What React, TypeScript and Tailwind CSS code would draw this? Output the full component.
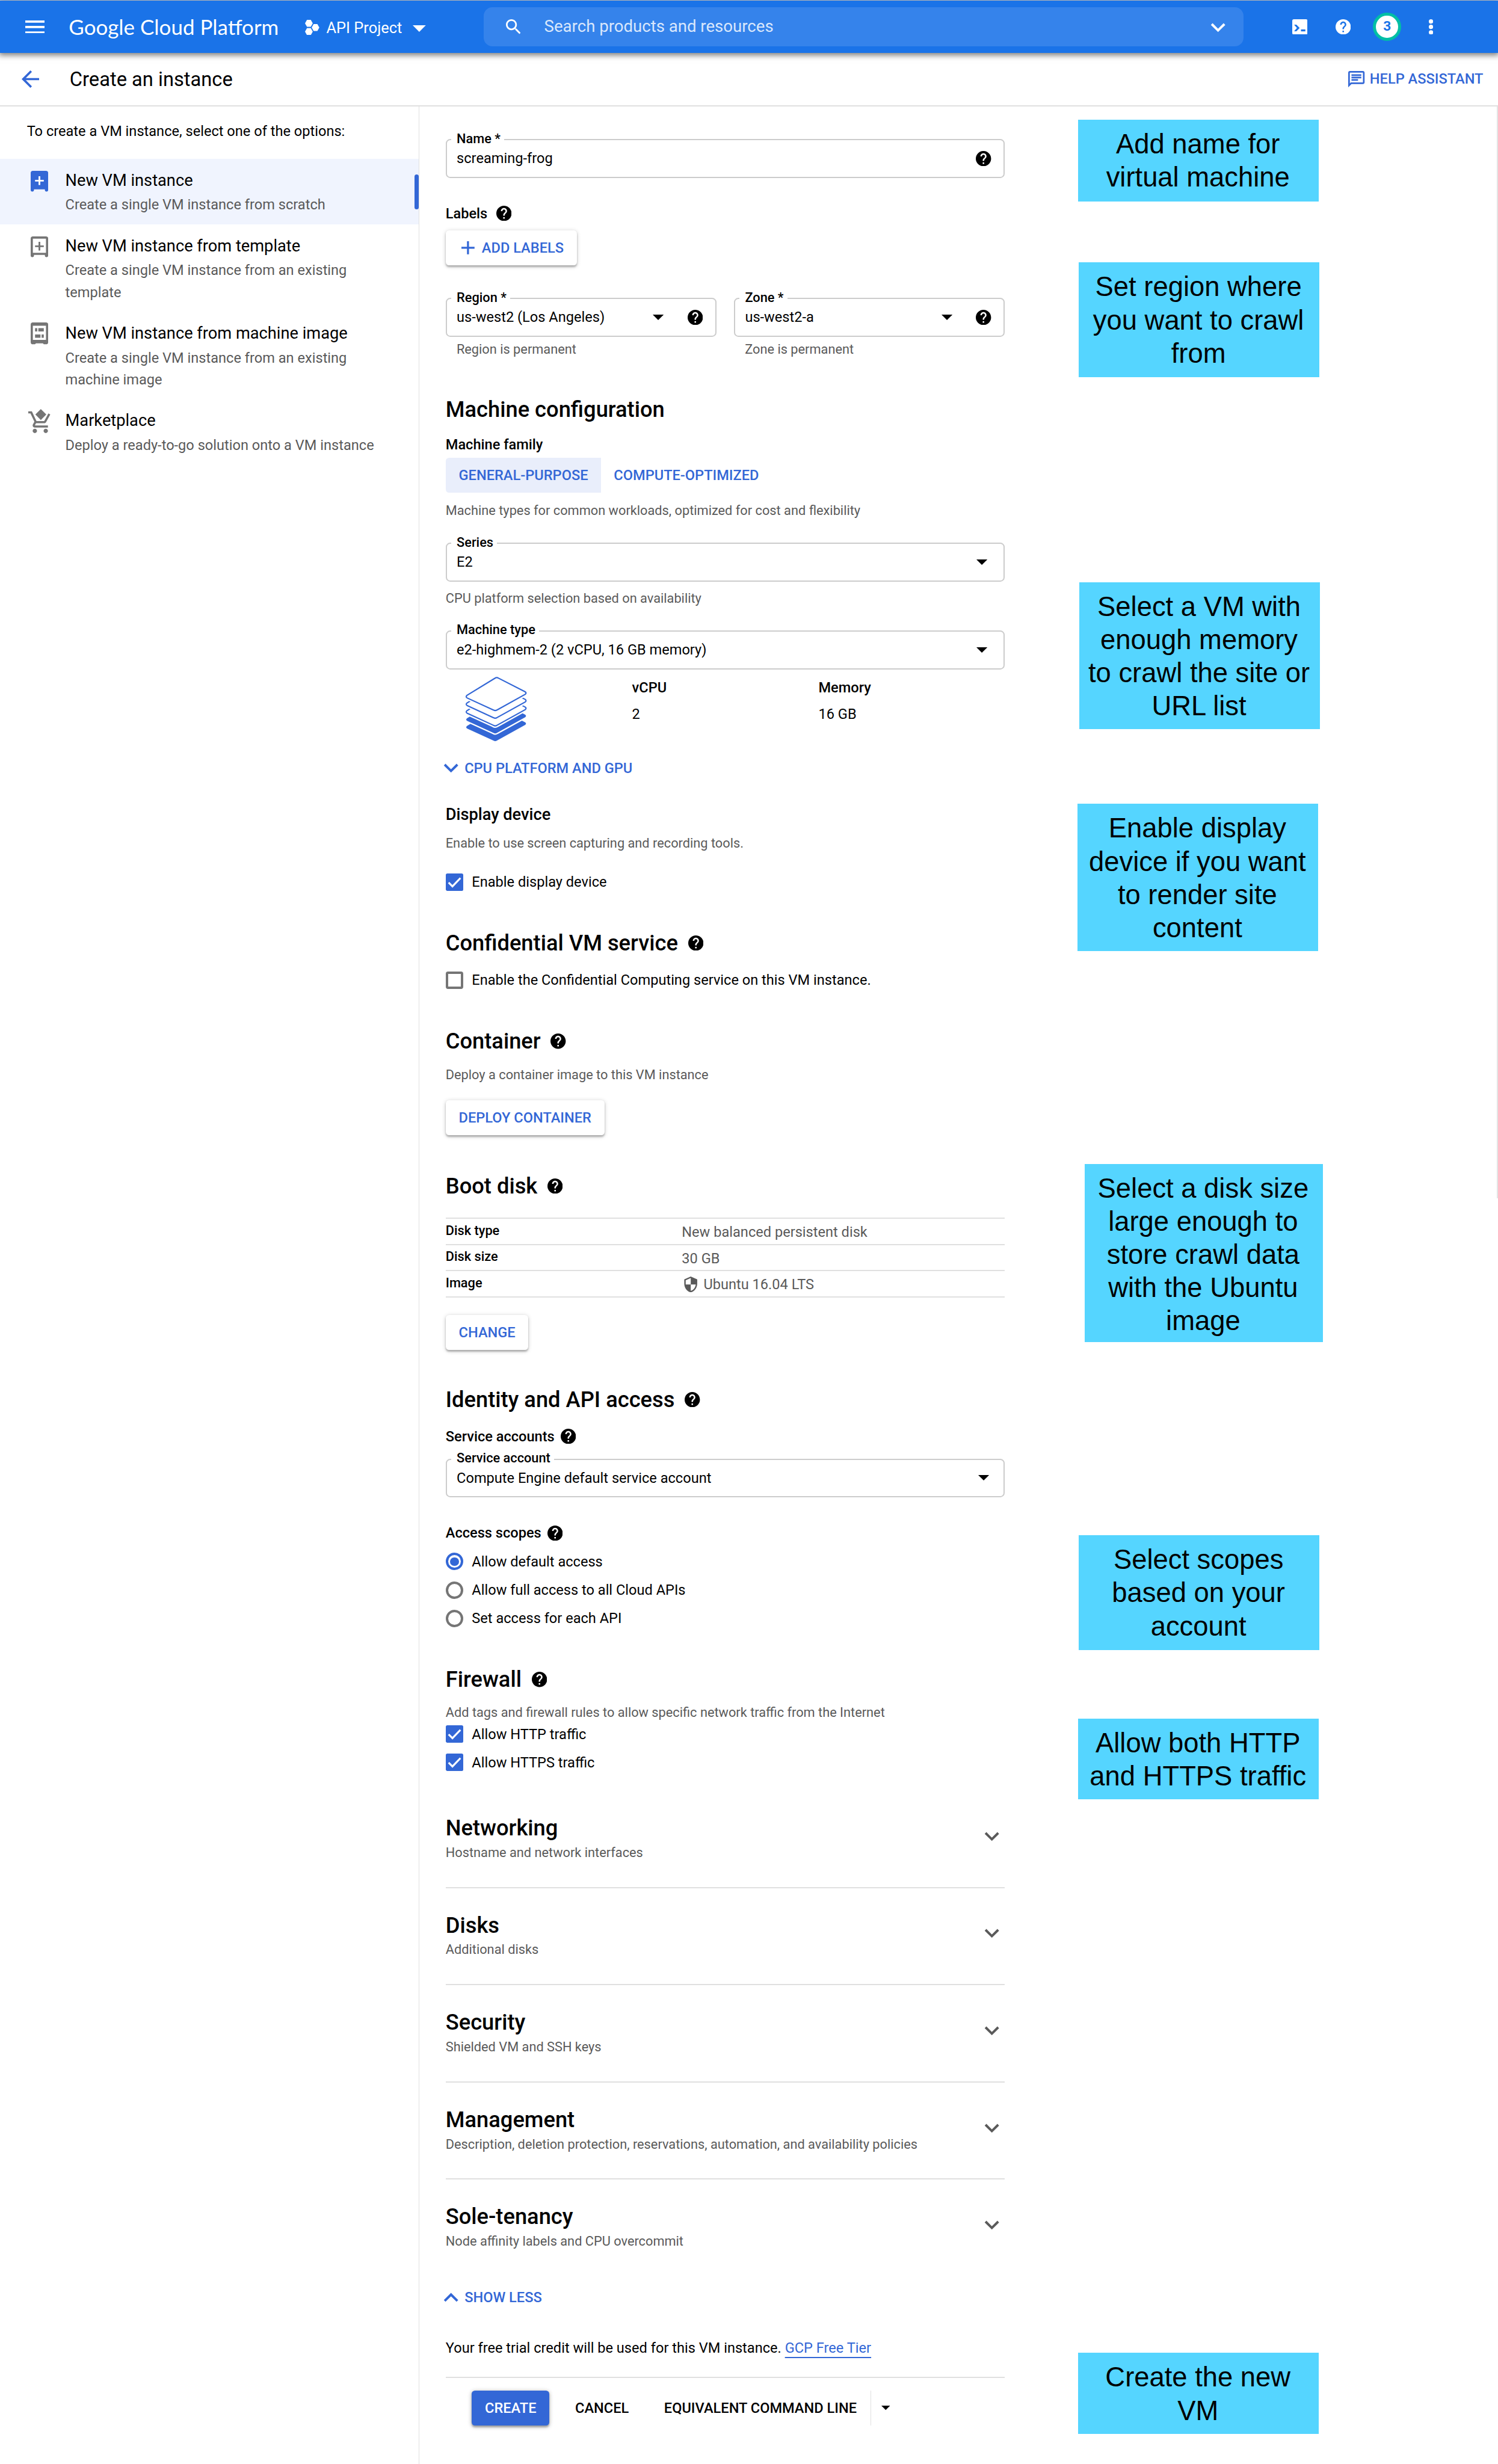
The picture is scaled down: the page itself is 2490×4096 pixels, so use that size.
import React from "react";

const HELP =
  "M12 2C6.48 2 2 6.48 2 12s4.48 10 10 10 10-4.48 10-10S17.52 2 12 2zm1 17h-2v-2h2v2zm2.07-7.75l-.9.92C13.45 12.9 13 13.5 13 15h-2v-.5c0-1.1.45-2.1 1.17-2.83l1.24-1.26c.37-.36.59-.86.59-1.41 0-1.1-.9-2-2-2s-2 .9-2 2H8c0-2.21 1.79-4 4-4s4 1.79 4 4c0 .88-.36 1.68-.93 2.25z";

function Help({ className = "" }: { className?: string }) {
  return (
    <svg viewBox="2 2 20 20" className={`size-[14px] shrink-0 fill-current ${className}`}>
      <path d={HELP} />
    </svg>
  );
}

function Caret({ className = "" }: { className?: string }) {
  return (
    <svg viewBox="0 0 10 5" className={`h-[5px] w-[10px] shrink-0 fill-current ${className}`}>
      <path d="M0 0h10L5 5z" />
    </svg>
  );
}

function Chevron({ className = "" }: { className?: string }) {
  return (
    <svg viewBox="6 8 12 8" className={`h-[8.8px] w-[14px] shrink-0 fill-current ${className}`}>
      <path d="M16.59 8.3L12 12.88 7.41 8.3 6 9.7l6 6 6-6z" />
    </svg>
  );
}

function Header() {
  return (
    <header className="relative z-10 flex h-[48px] items-center bg-[#1a73e8] text-white shadow-[0_1px_5px_1px_rgba(0,0,0,0.5)]">
      <svg viewBox="0 0 18 12" className="ml-[23px] h-[12px] w-[18px] shrink-0 fill-white">
        <path d="M0 0h18v2H0zM0 5h18v2H0zM0 10h18v2H0z" />
      </svg>
      <div className="ml-[22px] w-[216.3px] shrink-0 pt-[0.5px] whitespace-nowrap font-['Lato'] text-[19.25px] leading-[24px]">
        Google Cloud Platform
      </div>
      <svg viewBox="0 0 13.1 14" className="mt-[1px] h-[14px] w-[13.1px] shrink-0 fill-white">
        <path d="M1.8 0h3.5l1.8 3.2-1.8 3.2H1.8L0 3.2z" />
        <path d="M7.9 3.8h3.4l1.8 3.2-1.8 3.2H7.9L6.1 7z" />
        <path d="M1.8 7.6h3.5l1.8 3.2L5.3 14H1.8L0 10.8z" />
      </svg>
      <div className="ml-[6.4px] w-[79.2px] shrink-0 pt-[2.4px] whitespace-nowrap text-[14px] leading-[20px]">API Project</div>
      <svg viewBox="0 0 12 6" className="mt-[3px] h-[6px] w-[12px] shrink-0 fill-white">
        <path d="M0 0h12L6 6z" />
      </svg>
      <div className="ml-[53px] flex h-[36px] w-[695.7px] shrink-0 items-center rounded-[8px] bg-[#3583eb] pr-[16.7px] pl-[20px]">
        <svg viewBox="3 3 17.5 17.5" className="size-[13.5px] shrink-0 fill-white">
          <path d="M15.5 14h-.79l-.28-.27C15.41 12.59 16 11.11 16 9.5 16 5.91 13.09 3 9.5 3S3 5.91 3 9.5 5.91 16 9.5 16c1.61 0 3.09-.59 4.23-1.57l.27.28v.79l5 4.99L20.49 19l-4.99-5zm-6 0C7.01 14 5 11.99 5 9.5S7.01 5 9.5 5 14 7.01 14 9.5 11.99 14 9.5 14z" />
        </svg>
        <div className="ml-[21.8px] flex-1 text-[15.2px] leading-[20px] text-[#d9e7fc]">Search products and resources</div>
        <Chevron className="mt-[1.5px]" />
      </div>
      <svg viewBox="0 0 14 14" className="ml-[44.3px] size-[14px] shrink-0">
        <rect width="14" height="14" rx="1.5" fill="#fff" />
        <path d="M1.7 5h2.1l3 3-3 3H1.7l2.6-3z" fill="#1a73e8" />
        <path d="M8 9.300h4v1.8H8z" fill="#1a73e8" />
      </svg>
      <Help className="ml-[25.8px]" />
      <div className="ml-[20.2px] flex size-[26px] shrink-0 items-center justify-center rounded-full border-[3.2px] border-[#00bfa5] bg-white text-[12.5px] leading-none font-bold text-[#1a73e8]">
        3
      </div>
      <svg viewBox="0 0 4 14" className="ml-[25px] h-[14px] w-[4px] shrink-0 fill-white">
        <circle cx="2" cy="2" r="2" />
        <circle cx="2" cy="7" r="2" />
        <circle cx="2" cy="12" r="2" />
      </svg>
    </header>
  );
}

function TitleBar() {
  return (
    <div className="flex h-[49px] items-center border-b-[1.11px] border-[#e0e0e0] pr-[13.5px] pl-[20px]">
      <svg viewBox="4 4 16 16" className="size-[16px] shrink-0 fill-[#3367d6]">
        <path d="M20 11H7.83l5.59-5.59L12 4l-8 8 8 8 1.41-1.41L7.83 13H20v-2z" />
      </svg>
      <h1 className="ml-[27.8px] flex-1 pt-[1px] text-[18px] leading-[24px]">Create an instance</h1>
      <svg viewBox="2 2 20 20" className="size-[15px] shrink-0 fill-[#3367d6]">
        <path d="M4 4h16v12H5.17L4 17.17V4m0-2c-1.1 0-1.99.9-1.99 2L2 22l4-4h14c1.1 0 2-.9 2-2V4c0-1.1-.9-2-2-2H4zm2 10h8v2H6v-2zm0-3h12v2H6V9zm0-3h12v2H6V6z" />
      </svg>
      <div className="ml-[4.5px] text-[13px] leading-[20px] font-medium text-[#3367d6]">HELP ASSISTANT</div>
    </div>
  );
}

function SideItem({
  icon,
  title,
  lines,
  active = false,
}: {
  icon: React.ReactNode;
  title: string;
  lines: string[];
  active?: boolean;
}) {
  return (
    <div className={`flex pb-[7.9px] ${active ? "bg-[#f0f4fe]" : ""}`}>
      <div className="flex w-[59.8px] shrink-0 justify-center pt-[11px] pr-[0.8px] pl-[13px]">{icon}</div>
      <div className="flex-1 pt-[8.1px]">
        <div className="text-[15px] leading-[24px]">{title}</div>
        <div className="text-[13px] leading-[20px] text-[#5a5a5a]">
          {lines.map((l) => (
            <div key={l}>{l}</div>
          ))}
        </div>
      </div>
      {active && <div className="mt-[14px] h-[32px] w-[4px] rounded-[2px] bg-[#3367d6]" />}
    </div>
  );
}

function Sidebar() {
  return (
    <aside className="w-[384px] shrink-0 border-r border-[#e0e0e0]">
      <div className="mt-[12.4px] mb-[15.6px] pl-[24.6px] text-[13px] leading-[20px]">
        To create a VM instance, select one of the options:
      </div>
      <SideItem
        active
        title="New VM instance"
        lines={["Create a single VM instance from scratch"]}
        icon={
          <svg viewBox="0 0 16 19" className="h-[19px] w-[16px]">
            <path fill="#3367d6" d="M2 0h12a2 2 0 0 1 2 2v15.5a1.5 1.5 0 0 1-3 0V17H3v.5a1.5 1.5 0 0 1-3 0V2a2 2 0 0 1 2-2z" />
            <path fill="#fff" d="M7.2 5h1.6v3.2H12v1.6H8.8V13H7.2V9.8H4V8.2h3.2z" />
          </svg>
        }
      />
      <SideItem
        title="New VM instance from template"
        lines={["Create a single VM instance from an existing", "template"]}
        icon={
          <svg viewBox="0 0 16 19" className="h-[19px] w-[16px]">
            <path
              fill="#757575"
              fillRule="evenodd"
              d="M2 0h12a2 2 0 0 1 2 2v15.5a1.5 1.5 0 0 1-3 0V17H3v.5a1.5 1.5 0 0 1-3 0V2a2 2 0 0 1 2-2zM2 2v13h12V2z"
            />
            <path fill="#757575" d="M7.2 5h1.6v3.2H12v1.6H8.8V13H7.2V9.8H4V8.2h3.2z" />
          </svg>
        }
      />
      <SideItem
        title="New VM instance from machine image"
        lines={["Create a single VM instance from an existing", "machine image"]}
        icon={
          <svg viewBox="0 0 16 20" className="-mt-[1px] h-[20px] w-[16px]">
            <path
              fill="#757575"
              fillRule="evenodd"
              d="M2 0h12a2 2 0 0 1 2 2v16a2 2 0 0 1-2 2h-2l-.8-.9H4.8L4 20H2a2 2 0 0 1-2-2V2a2 2 0 0 1 2-2zM2 3v13h12V3z"
            />
            <path fill="#757575" d="M4 5.2h2v3H4zM7 5.2h5v3H7zM4 11h5v3H4zM10 11h2v3h-2z" />
          </svg>
        }
      />
      <SideItem
        title="Marketplace"
        lines={["Deploy a ready-to-go solution onto a VM instance"]}
        icon={
          <svg viewBox="1 0 20.2 22" className="-mt-[2px] h-[22px] w-[20.2px] shrink-0 fill-[#757575]">
            <path d="M7 18c-1.1 0-1.99.9-1.99 2S5.9 22 7 22s2-.9 2-2-.9-2-2-2zm10 0c-1.1 0-1.99.9-1.99 2s.89 2 1.99 2 2-.9 2-2-.9-2-2-2zm-9.83-3.25l.03-.12.9-1.63h7.45c.75 0 1.41-.41 1.75-1.03l3.86-7.01L19.42 4h-.01l-1.1 2-2.76 5H8.53l-.13-.27L6.16 6l-.95-2-.94-2H1v2h2l3.6 7.59-1.35 2.45c-.16.28-.25.61-.25.96 0 1.1.9 2 2 2h12v-2H7.42c-.13 0-.25-.11-.25-.25z" />
            <path d="M12.5 0l5 5-5 5-5-5z" />
          </svg>
        }
      />
    </aside>
  );
}

function Field({
  label,
  value,
  caret = false,
  help = false,
  caretPad = "mr-[15.1px]",
  className = "",
}: {
  label: string;
  value: string;
  caret?: boolean;
  help?: boolean;
  caretPad?: string;
  className?: string;
}) {
  return (
    <div className={`relative flex h-[35.5px] items-center rounded-[4px] border-[1.11px] border-[#cccccc] pl-[9px] ${className}`}>
      <div className="absolute -top-[9.8px] left-[4px] bg-white pr-[3.5px] pl-[5px] text-[12px] leading-[16px] font-medium">
        {label}
      </div>
      <div className="flex-1 text-[13px] leading-[20px]">{value}</div>
      {caret && <Caret className={caretPad} />}
      {help && <Help className="mr-[11.4px]" />}
    </div>
  );
}

function H2({ children, help = false, className = "" }: { children: string; help?: boolean; className?: string }) {
  return (
    <h2 className={`flex items-center text-[20px] leading-[24px] font-medium ${className}`}>
      <span className="pt-[0.5px] leading-[23.5px]">{children}</span>
      {help && <Help className="ml-[9.2px]" />}
    </h2>
  );
}

function Sub({
  children,
  help = false,
  gap = "ml-[5.5px]",
  className = "",
}: {
  children: string;
  help?: boolean;
  gap?: string;
  className?: string;
}) {
  return (
    <div className={`flex items-center text-[13px] leading-[20px] font-medium ${className}`}>
      {children}
      {help && <Help className={gap} />}
    </div>
  );
}

function Hint({ children, className = "" }: { children: string; className?: string }) {
  return <div className={`text-[12px] leading-[16px] text-[#5a5a5a] ${className}`}>{children}</div>;
}

function Check({ children, checked = false, className = "" }: { children: string; checked?: boolean; className?: string }) {
  return (
    <div className={`flex h-[20px] items-center text-[13px] leading-[20px] ${className}`}>
      {checked ? (
        <svg viewBox="0 0 16 16" className="size-[16px] shrink-0">
          <rect width="16" height="16" rx="1.5" fill="#3367d6" />
          <path d="M2.6 8.3l3.5 3.5 7.3-7.6" fill="none" stroke="#fff" strokeWidth="1.7" />
        </svg>
      ) : (
        <div className="size-[16px] shrink-0 rounded-[2px] border-[2.21px] border-[#757575]" />
      )}
      <span className="ml-[8px]">{children}</span>
    </div>
  );
}

function Radio({ children, on = false }: { children: string; on?: boolean }) {
  return (
    <div className="flex h-[20px] items-center text-[13px] leading-[20px]">
      <div
        className={`flex size-[16px] shrink-0 items-center justify-center rounded-full border-[2.21px] ${
          on ? "border-[#3367d6]" : "border-[#757575]"
        }`}
      >
        {on && <div className="size-[8px] rounded-full bg-[#3367d6]" />}
      </div>
      <span className="ml-[8px]">{children}</span>
    </div>
  );
}

function RaisedButton({ children, className = "" }: { children: React.ReactNode; className?: string }) {
  return (
    <button
      className={`flex h-[32px] w-fit items-center rounded-[3px] bg-white px-[12px] text-[13px] leading-[20px] font-medium text-[#3367d6] shadow-[0_1.5px_1.5px_rgba(0,0,0,0.22),0_1px_4px_rgba(0,0,0,0.2)] ${className}`}
    >
      {children}
    </button>
  );
}

function Layers() {
  const shape = "M26.8 1.2Q28.4 0 30.2 1.1L54.3 13.4Q56.2 14.5 54.6 15.9L28.8 30.2Q27.2 31.3 25.4 30.2L1.6 19.3Q-.3 18.2 1.3 16.8z";
  return (
    <svg viewBox="-0.5 -0.2 57 59.8" className="ml-[17.8px] h-[59.8px] w-[57px]">
      <g transform="translate(0 28)">
        <path d={shape} fill="#3367d6" />
      </g>
      <g transform="translate(0 21)">
        <path d={shape} fill="#3367d6" stroke="#fff" strokeWidth="2.4" />
        <path d={shape} fill="#3367d6" />
      </g>
      {[14, 7, 0].map((y) => (
        <g key={y} transform={`translate(0 ${y})`}>
          <path d={shape} fill="#fff" stroke="#fff" strokeWidth="3.6" />
          <path d={shape} fill="#fff" stroke="#3367d6" strokeWidth="1.2" />
        </g>
      ))}
    </svg>
  );
}

const panels = [
  ["Networking", "Hostname and network interfaces"],
  ["Disks", "Additional disks"],
  ["Security", "Shielded VM and SSH keys"],
  ["Management", "Description, deletion protection, reservations, automation, and availability policies"],
  ["Sole-tenancy", "Node affinity labels and CPU overcommit"],
];

function DiskRow({ name, children }: { name: string; children: React.ReactNode }) {
  return (
    <div className="flex h-[24px] border-b-[1.11px] border-[#e0e0e0]">
      <div className="w-[216.2px] pt-[2.4px] text-[12px] leading-[16px] font-medium">{name}</div>
      <div className="flex items-center text-[13px] leading-[20px] text-[#5a5a5a]">{children}</div>
    </div>
  );
}

function Form() {
  return (
    <main className="ml-[24px] w-[512px] shrink-0">
      <Field className="mt-[29.9px]" label="Name *" value="screaming-frog" help />
      <Sub className="mt-[22.5px]" help gap="ml-[8px]">
        Labels
      </Sub>
      <RaisedButton className="mt-[5.5px]">
        <svg viewBox="0 0 12 12" className="mr-[6.5px] ml-[2.6px] size-[12px] fill-[#3367d6]">
          <path d="M5.1 0h1.8v5.1H12v1.8H6.9V12H5.1V6.9H0V5.1h5.1z" />
        </svg>
        ADD LABELS
      </RaisedButton>
      <div className="mt-[30px] flex gap-4">
        <div className="w-[248px]">
          <Field label="Region *" value="us-west2 (Los Angeles)" caret help caretPad="mr-[21.8px]" />
          <Hint className="mt-[3.2px] pl-[10px]">Region is permanent</Hint>
        </div>
        <div className="w-[248px]">
          <Field label="Zone *" value="us-west2-a" caret help caretPad="mr-[21.8px]" />
          <Hint className="mt-[3.2px] pl-[10px]">Zone is permanent</Hint>
        </div>
      </div>

      <H2 className="mt-[35.2px]">Machine configuration</H2>
      <Sub className="mt-[10.6px]">Machine family</Sub>
      <div className="mt-[1.6px] flex h-[32px] items-center text-[13px] leading-[20px] font-medium text-[#3367d6]">
        <div className="flex h-[32px] w-[142.5px] items-center rounded-l-[3px] bg-[#e9eefb] pl-[12px]">GENERAL-PURPOSE</div>
        <div className="pl-[11.5px]">COMPUTE-OPTIMIZED</div>
      </div>
      <Hint className="mt-[8.5px]">Machine types for common workloads, optimized for cost and flexibility</Hint>
      <Field className="mt-[21.6px]" label="Series" value="E2" caret />
      <Hint className="mt-[7.1px]">CPU platform selection based on availability</Hint>
      <Field className="mt-[21.7px]" label="Machine type" value="e2-highmem-2 (2 vCPU, 16 GB memory)" caret />
      <div className="mt-[6.8px] grid h-[60px] grid-cols-3 text-[13px] leading-[20px]">
        <Layers />
        <div>
          <div className="font-medium">vCPU</div>
          <div className="mt-[4px]">2</div>
        </div>
        <div>
          <div className="font-medium">Memory</div>
          <div className="mt-[4px]">16 GB</div>
        </div>
      </div>
      <div className="mt-[14px] -ml-[2px] flex items-center text-[13px] leading-[20px] font-medium text-[#3367d6]">
        <Chevron className="mr-[5.3px]" />
        CPU PLATFORM AND GPU
      </div>

      <div className="mt-[22px] text-[15px] leading-[20px] font-medium">Display device</div>
      <Hint className="mt-[8.6px]">Enable to use screen capturing and recording tools.</Hint>
      <Check className="mt-[17.3px]" checked>
        Enable display device
      </Check>

      <H2 className="mt-[33.9px]" help>
        Confidential VM service
      </H2>
      <Check className="mt-[12.1px]">Enable the Confidential Computing service on this VM instance.</Check>

      <H2 className="mt-[34px]" help>
        Container
      </H2>
      <Hint className="mt-[10.4px]">Deploy a container image to this VM instance</Hint>
      <RaisedButton className="mt-[15.6px]">DEPLOY CONTAINER</RaisedButton>

      <H2 className="mt-[34.4px]" help>
        Boot disk
      </H2>
      <div className="mt-[17.1px] border-t-[1.11px] border-[#e0e0e0]">
        <DiskRow name="Disk type">
          <span className="pt-[1.2px]">New balanced persistent disk</span>
        </DiskRow>
        <DiskRow name="Disk size">
          <span className="pt-[1.2px]">30 GB</span>
        </DiskRow>
        <DiskRow name="Image">
          <svg viewBox="3 1 18 22" className="mt-[0.6px] mr-[5.4px] ml-[2.2px] h-[14.5px] w-[12.3px] fill-[#5a5a5a]">
            <path d="M12 1L3 5v6c0 5.55 3.84 10.74 9 12 5.16-1.26 9-6.45 9-12V5l-9-4zm0 10.99h7c-.53 4.12-3.28 7.79-7 8.94V12H5V6.3l7-3.11v8.8z" />
          </svg>
          <span className="pt-[1.2px]">Ubuntu 16.04 LTS</span>
        </DiskRow>
      </div>
      <RaisedButton className="mt-[15.9px]">CHANGE</RaisedButton>

      <H2 className="mt-[33.6px]" help>
        Identity and API access
      </H2>
      <Sub className="mt-[11.6px]" help>
        Service accounts
      </Sub>
      <Field
        className="mt-[10.4px]"
        label="Service account"
        value="Compute Engine default service account"
        caret
        caretPad="mr-[13.1px]"
      />
      <Sub className="mt-[22.6px]" help>
        Access scopes
      </Sub>
      <div className="mt-[6.2px] flex flex-col gap-[6px]">
        <Radio on>Allow default access</Radio>
        <Radio>Allow full access to all Cloud APIs</Radio>
        <Radio>Set access for each API</Radio>
      </div>

      <H2 className="mt-[33.9px]" help>
        Firewall
      </H2>
      <Hint className="mt-[10.4px]">Add tags and firewall rules to allow specific network traffic from the Internet</Hint>
      <div className="mt-[1.7px] mb-[16px] flex flex-col gap-[6px]">
        <Check checked>Allow HTTP traffic</Check>
        <Check checked>Allow HTTPS traffic</Check>
      </div>

      {panels.map(([title, text], i) => (
        <section key={title} className={`flex h-[89px] justify-between ${i < 4 ? "border-b-[1.11px] border-[#e0e0e0]" : ""}`}>
          <div className="pt-[22px]">
            <H2>{title}</H2>
            <Hint className="mt-[2.3px]">{text}</Hint>
          </div>
          <Chevron className="mt-[37.3px] mr-[5px] text-[#5a5a5a]" />
        </section>
      ))}

      <div className="mt-[8.7px] -ml-[2px] flex items-center text-[13px] leading-[20px] font-medium text-[#3367d6]">
        <Chevron className="mr-[5.3px] rotate-180" />
        SHOW LESS
      </div>
      <div className="mt-[26.6px] h-[20px] text-[13px] leading-[20px]">
        Your free trial credit will be used for this VM instance.{" "}
        <span className="text-[#3367d6] underline decoration-[1.11px] underline-offset-[3.6px] [text-decoration-skip-ink:none]">
          GCP Free Tier
        </span>
      </div>
      <div className="mt-[16.2px] flex items-center border-t-[1.11px] border-[#e0e0e0] pt-[11.5px] pl-[24px] text-[13px] leading-[20px] font-medium">
        <button className="flex h-[32px] w-[71px] items-center justify-center rounded-[3px] bg-[#3367d6] text-white shadow-[0_1.5px_1.5px_rgba(0,0,0,0.22),0_1px_4px_rgba(0,0,0,0.3)]">
          CREATE
        </button>
        <div className="ml-[23.6px] w-[81.4px]">CANCEL</div>
        <div className="flex h-[32px] w-[189.3px] items-center border-r border-[#e0e0e0]">EQUIVALENT COMMAND LINE</div>
        <svg viewBox="0 0 10 5" className="ml-[9.6px] h-[4px] w-[8px] fill-current">
          <path d="M0 0h10L5 5z" />
        </svg>
      </div>
    </main>
  );
}

const notes = [
  { box: "mt-[12px] ml-[67px] h-[74.8px] w-[220.5px]", lines: ["Add name for", "virtual machine"] },
  { box: "mt-[56.1px] ml-[67.5px] h-[105px] w-[220.5px]", lines: ["Set region where", "you want to crawl", "from"] },
  {
    box: "mt-[187.7px] ml-[68px] h-[134.7px] w-[220.5px]",
    lines: ["Select a VM with", "enough memory", "to crawl the site or", "URL list"],
  },
  {
    box: "mt-[68.3px] ml-[66.5px] h-[134.7px] w-[220.5px]",
    lines: ["Enable display", "device if you want", "to render site", "content"],
  },
  {
    box: "mt-[194.8px] ml-[73px] h-[163px] w-[218px]",
    lines: ["Select a disk size", "large enough to", "store crawl data", "with the Ubuntu", "image"],
  },
  { box: "mt-[177.1px] ml-[67.5px] h-[105px] w-[220.5px]", lines: ["Select scopes", "based on your", "account"] },
  { box: "mt-[62.9px] ml-[67px] h-[74px] w-[220.5px]", lines: ["Allow both HTTP", "and HTTPS traffic"] },
  { box: "mt-[506.8px] ml-[67px] h-[74px] w-[220.5px]", lines: ["Create the new", "VM"] },
];

function Notes() {
  return (
    <div className="flex flex-1 flex-col">
      {notes.map((n) => (
        <div
          key={n.lines[0]}
          className={`shrink-0 bg-[#55d5ff] pt-[7.2px] pr-[1px] text-center font-['Liberation_Sans'] text-[25px] leading-[30.4px] whitespace-nowrap ${n.box}`}
        >
          {n.lines.map((l) => (
            <div key={l}>{l}</div>
          ))}
        </div>
      ))}
    </div>
  );
}

export default function App() {
  return (
    <div className="h-[2256px] overflow-hidden bg-white font-['Roboto',sans-serif] text-black [zoom:1.8156]">
      <div className="h-[0.5px] bg-[#e8eaed]" />
      <Header />
      <TitleBar />
      <div className="flex h-[2158.5px]">
        <Sidebar />
        <Form />
        <Notes />
        <div className="h-[999.5px] w-[1px] shrink-0 bg-[#e4e4e4]" />
      </div>
    </div>
  );
}
